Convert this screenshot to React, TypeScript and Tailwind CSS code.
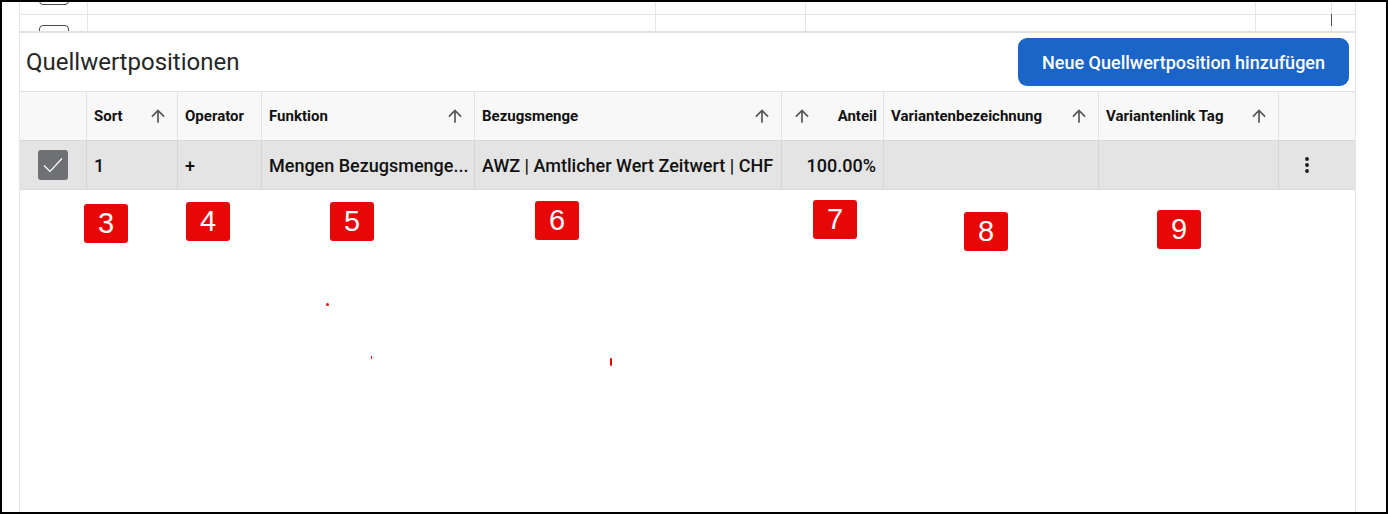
import React from "react";

const cols = "grid-cols-[66px_91px_84px_213px_307px_102px_215px_180px_77px]";

function ArrowUp() {
  return (
    <svg width="20" height="20" viewBox="0 0 24 24" className="shrink-0 text-[#555]" fill="currentColor">
      <path d="M4 12l1.41 1.41L11 7.83V20h2V7.83l5.58 5.59L20 12l-8-8-8 8z" />
    </svg>
  );
}

function Badge({ n, x, y }: { n: string; x: number; y: number }) {
  return (
    <div
      className="absolute flex h-[39px] w-[44px] items-center justify-center rounded-[3px] bg-[#e60707] text-[29px] leading-none text-white"
      style={{ left: x, top: y, fontFamily: '"Liberation Sans", Arial, sans-serif' }}
    >
      {n}
    </div>
  );
}

function HeadCell({
  label,
  sort = "right",
  first = false,
}: {
  label?: string;
  sort?: "right" | "left" | "none";
  first?: boolean;
}) {
  return (
    <div
      className={`flex h-full items-center ${first ? "" : "border-l border-[#e2e2e2]"} ${
        sort === "left" ? "pl-[10px] pr-[6px]" : "pl-[7px] pr-[9px]"
      }`}
    >
      {sort === "left" && <ArrowUp />}
      {label && (
        <span className={`text-[15px] font-bold text-[#111] ${sort === "left" ? "ml-auto" : ""}`}>{label}</span>
      )}
      {sort === "right" && (
        <span className="ml-auto">
          <ArrowUp />
        </span>
      )}
    </div>
  );
}

function BodyCell({ children, first = false, right = false }: { children?: React.ReactNode; first?: boolean; right?: boolean }) {
  return (
    <div
      className={`flex h-full min-w-0 items-center ${first ? "" : "border-l border-[#d6d6d6]"} ${
        right ? "justify-end pr-[7px]" : "pl-[7px] pr-[6px]"
      }`}
    >
      {children}
    </div>
  );
}

export default function App() {
  return (
    <div
      className="relative h-[514px] w-[1388px] overflow-hidden border-2 border-black bg-white"
      style={{ fontFamily: 'Roboto, "Noto Sans", Arial, sans-serif' }}
    >
      <div className="ml-[17px] flex h-full w-[1337px] flex-col border-x border-[#e4e4e4]">
        {/* previous table, scrolled so only its lower edge shows */}
        <div className="relative h-[31px] shrink-0 overflow-hidden border-b-2 border-[#e2e2e2]">
          <div className="-mt-[37px] grid grid-cols-[67px_568px_150px_450px_76px_24px]">
            {[0, 1].map((r) => (
              <React.Fragment key={r}>
                <div className="flex h-[50px] items-center justify-center border-b border-[#e6e6e6]">
                  <div className="h-[30px] w-[30px] rounded-[4px] border-[1.5px] border-[#4a4a4a]" />
                </div>
                <div className="h-[50px] border-b border-l border-[#e6e6e6]" />
                <div className="h-[50px] border-b border-l border-[#e6e6e6]" />
                <div className="h-[50px] border-b border-l border-[#e6e6e6]" />
                <div className="relative h-[50px] border-b border-l border-[#e6e6e6]">
                  {r === 0 && <div className="absolute right-[-1px] top-[49px] h-[12px] w-px bg-[#555]" />}
                </div>
                <div className="h-[50px] border-b border-l border-[#e6e6e6]" />
              </React.Fragment>
            ))}
          </div>
        </div>

        {/* section heading */}
        <div className="flex shrink-0 items-center justify-between pl-[6px] pr-[6px] pt-[5px] pb-[5px]">
          <h2 className="text-[24px] font-normal text-[#262626]">Quellwertpositionen</h2>
          <button className="h-[48px] rounded-[9px] bg-[#1b64c8] px-[24px] text-[18px] font-medium text-white">
            Neue Quellwertposition hinzufügen
          </button>
        </div>

        {/* positions table */}
        <div className={`grid ${cols} h-[49px] shrink-0 border-t border-[#e0e0e0] bg-[#f8f8f8]`}>
          <HeadCell sort="none" first />
          <HeadCell label="Sort" />
          <HeadCell label="Operator" sort="none" />
          <HeadCell label="Funktion" />
          <HeadCell label="Bezugsmenge" />
          <HeadCell label="Anteil" sort="left" />
          <HeadCell label="Variantenbezeichnung" />
          <HeadCell label="Variantenlink Tag" />
          <HeadCell sort="none" />
        </div>
        <div
          className={`grid ${cols} h-[50px] shrink-0 border-t border-b border-[#d8d8d8] bg-[#e4e4e4] text-[18px] font-medium text-[#111]`}
        >
          <div className="flex h-full items-center justify-center">
            <div className="flex h-[30px] w-[30px] items-center justify-center rounded-[3px] bg-[#6f7073]">
              <svg width="24" height="24" viewBox="0 0 24 24" fill="none" stroke="white" strokeWidth="1.2">
                <path d="M3 12.5l6 6L21 5.5" />
              </svg>
            </div>
          </div>
          <BodyCell>1</BodyCell>
          <BodyCell>+</BodyCell>
          <BodyCell>
            <span className="whitespace-nowrap">Mengen Bezugsmenge...</span>
          </BodyCell>
          <BodyCell>
            <span className="whitespace-nowrap">AWZ | Amtlicher Wert Zeitwert | CHF</span>
          </BodyCell>
          <BodyCell right>100.00%</BodyCell>
          <BodyCell />
          <BodyCell />
          <div className="flex h-full items-center border-l border-[#d6d6d6] pl-[26px]">
            <svg width="4" height="16" viewBox="0 0 4 16" fill="#1a1a1a">
              <circle cx="2" cy="2" r="1.9" />
              <circle cx="2" cy="8" r="1.9" />
              <circle cx="2" cy="14" r="1.9" />
            </svg>
          </div>
        </div>
        <div className="flex-1" />
      </div>

      {/* numbered callouts */}
      <Badge n="3" x={82} y={202} />
      <Badge n="4" x={184} y={200} />
      <Badge n="5" x={328} y={200} />
      <Badge n="6" x={533} y={199} />
      <Badge n="7" x={811} y={198} />
      <Badge n="8" x={962} y={210} />
      <Badge n="9" x={1155} y={208} />
      <div className="absolute left-[324px] top-[301px] h-[3px] w-[3px] rounded-full bg-[#e60707]" />
      <div className="absolute left-[369px] top-[354px] h-[3px] w-px bg-[#e60707]" />
      <div className="absolute left-[608px] top-[356px] h-[8px] w-[2px] rounded-full bg-[#e60707]" />
    </div>
  );
}
